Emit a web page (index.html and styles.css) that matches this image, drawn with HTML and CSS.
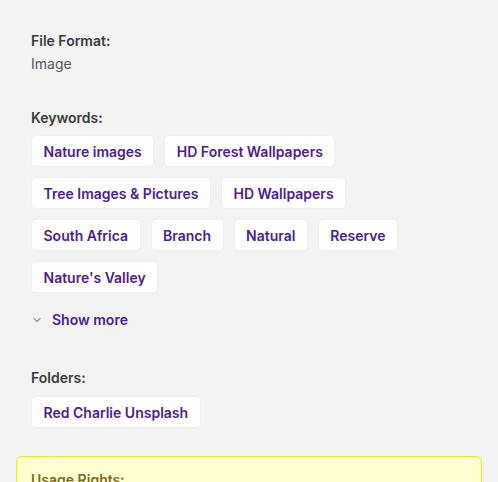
FILE: index.html
```html
<!DOCTYPE html>
<html lang="en">
<head>
  <meta charset="UTF-8" />
  <title>Asset Details</title>
  <link rel="stylesheet" href="styles.css">
</head>
<body>

  <div class="details">

    <div class="section">
      <div class="label">File Format:</div>
      <div class="value">Image</div>
    </div>

    <div class="section keywords">
      <div class="label">Keywords:</div>
      <div class="tags">
        <a class="tag" href="#">Nature images</a>
        <a class="tag" href="#">HD Forest Wallpapers</a>
        <a class="tag" href="#">Tree Images &amp; Pictures</a>
        <a class="tag" href="#">HD Wallpapers</a>
        <a class="tag" href="#">South Africa</a>
        <a class="tag" href="#">Branch</a>
        <a class="tag" href="#">Natural</a>
        <a class="tag" href="#">Reserve</a>
        <a class="tag" href="#">Nature's Valley</a>
      </div>
      <button class="show-more">
        <svg width="10" height="10" viewBox="0 0 10 10" aria-hidden="true">
          <path d="M2 3.5 L5 6.5 L8 3.5" fill="none" stroke="#9a9a9a" stroke-width="1.3" stroke-linecap="round" stroke-linejoin="round"/>
        </svg>
        Show more
      </button>
    </div>

    <div class="section folders">
      <div class="label">Folders:</div>
      <div class="tags">
        <a class="tag" href="#">Red Charlie Unsplash</a>
      </div>
    </div>

    <div class="usage">
      <div class="usage-title">Usage Rights:</div>
    </div>

  </div>

</body>
</html>
```

FILE: styles.css
```css
body {
  margin: 0;
  padding: 0;
  background-color: #f3f3f3;
  font-family: Inter, "Noto Sans", Arial, sans-serif;
  font-size: 14px;
  color: #3b3b3b;
}

.details {
  padding: 31px 16px 0;
}

.section {
  padding: 0 40px 0 15px;
}

.label {
  font-weight: 600;
  line-height: 20px;
  color: #3b3b3b;
}

.value {
  margin-top: 3px;
  line-height: 20px;
  color: #555;
}

.keywords {
  margin-top: 34px;
}

.tags {
  display: flex;
  flex-wrap: wrap;
  gap: 10px;
  margin-top: 7px;
}

.tag {
  display: inline-flex;
  align-items: center;
  height: 32px;
  box-sizing: border-box;
  padding: 0 11.5px;
  background-color: #fff;
  border: 1px solid #efefef;
  border-radius: 5px;
  color: #4c1d95;
  font-weight: 600;
  text-decoration: none;
}

/* Show more toggle under the keyword list */
.show-more {
  display: flex;
  align-items: center;
  gap: 10px;
  margin-top: 17px;
  padding: 0 0 0 1px;
  border: none;
  background: none;
  font: inherit;
  font-weight: 600;
  line-height: 20px;
  color: #4c1d95;
  cursor: pointer;
}

.folders {
  margin-top: 38px;
}

.folders .tags {
  margin-top: 8px;
}

.usage {
  margin-top: 28px;
  padding: 13px 14px;
  background-color: #ffffcf;
  border: 1px solid #e3ee1e;
  border-radius: 6px;
}

.usage-title {
  font-weight: 600;
  line-height: 20px;
  color: #7d6a1c;
}
```
